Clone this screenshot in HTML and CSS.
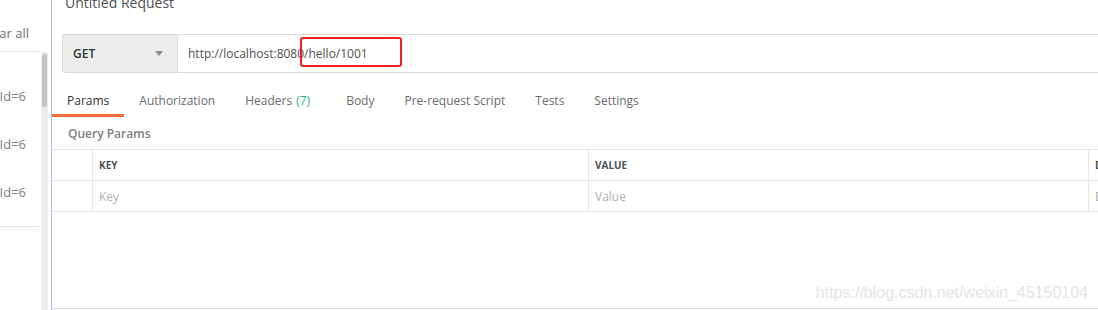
FILE: index.html
```html
<!DOCTYPE html>
<html lang="en">

<head>
    <meta charset="UTF-8">
    <title>Untitled Request</title>
    <link rel="stylesheet" href="styles.css">
</head>

<body>

    <div class="sidebar">
        <div class="side-list">
            <div class="side-head">Clear all</div>
            <div class="side-items">
                <div class="side-item">?userId=6</div>
                <div class="side-item">?userId=6</div>
                <div class="side-item">?userId=6</div>
            </div>
        </div>
        <div class="scroll-track">
            <div class="scroll-thumb"></div>
        </div>
    </div>

    <div class="main">
        <div class="title">Untitled Request</div>

        <div class="url-row">
            <div class="method">
                <span>GET</span>
                <span class="caret"></span>
            </div>
            <div class="url-input">
                http://localhost:8080/hello/1001
                <div class="mark"></div>
            </div>
        </div>

        <div class="tabs">
            <div class="tab active">Params</div>
            <div class="tab">Authorization</div>
            <div class="tab with-count">Headers <span class="count">(7)</span></div>
            <div class="tab">Body</div>
            <div class="tab">Pre-request Script</div>
            <div class="tab">Tests</div>
            <div class="tab">Settings</div>
        </div>

        <div class="section-label">Query Params</div>

        <div class="params-table">
            <div class="cell"></div>
            <div class="cell head">Key</div>
            <div class="cell head">Value</div>
            <div class="cell head">Description</div>

            <div class="cell"></div>
            <div class="cell placeholder">Key</div>
            <div class="cell placeholder">Value</div>
            <div class="cell placeholder">Description</div>
        </div>

        <div class="filler"></div>

        <div class="watermark">https://blog.csdn.net/weixin_45150104</div>
    </div>

</body>

</html>
```

FILE: styles.css
```css
body {
    margin: 0;
    height: 310px;
    overflow: hidden;
    display: flex;
    font-family: 'Open Sans', 'Noto Sans', sans-serif;
    color: #505050;
    background-color: #fff;
}

/* history sidebar, scrolled so only its right edge shows */
.sidebar {
    width: 51px;
    flex-shrink: 0;
    display: flex;
    border-right: 1px solid #a8c3ee;
}

.side-list {
    width: 41px;
    flex-shrink: 0;
    overflow: hidden;
}

.side-head {
    height: 37px;
    padding-top: 14px;
    display: flex;
    align-items: center;
    justify-content: flex-end;
    padding-right: 10px;
    white-space: nowrap;
    font-size: 13px;
    color: #707070;
    border-bottom: 1px solid #e2e2e2;
    margin-right: 2px;
}

.side-items {
    padding: 20px 0 10px;
    border-bottom: 1px solid #e2e2e2;
    margin-right: 2px;
}

.side-item {
    height: 48px;
    display: flex;
    align-items: center;
    justify-content: flex-end;
    padding-right: 13px;
    white-space: nowrap;
    font-size: 13px;
    color: #808080;
}

.scroll-track {
    width: 7px;
    margin-top: 52px;
    background-color: #ececec;
}

.scroll-thumb {
    height: 53px;
    margin: 2px 1px 0;
    border-radius: 3px;
    background-color: #c3c3c3;
}

/* request builder */
.main {
    flex: 1;
    position: relative;
    display: flex;
    flex-direction: column;
    padding-bottom: 1px;
    min-width: 0;
}

.title {
    margin-top: -7px;
    padding-left: 13px;
    line-height: 20px;
    font-size: 14px;
    color: #505050;
}

.url-row {
    display: flex;
    height: 39px;
    margin: 21px 0 0 10px;
}

.method {
    width: 116px;
    box-sizing: border-box;
    display: flex;
    align-items: center;
    justify-content: space-between;
    padding: 0 14px 0 10px;
    background-color: #ededed;
    border: 1px solid #d9d9d9;
    border-radius: 3px 0 0 3px;
    font-size: 12px;
    font-weight: 600;
    color: #333;
}

.caret {
    width: 0;
    height: 0;
    border-left: 4px solid transparent;
    border-right: 4px solid transparent;
    border-top: 5px solid #8a8a8a;
}

.url-input {
    flex: 1;
    position: relative;
    display: flex;
    align-items: center;
    padding-left: 10px;
    border-top: 1px solid #d9d9d9;
    border-bottom: 1px solid #d9d9d9;
    font-size: 12px;
    color: #505050;
    white-space: nowrap;
}

/* red highlight drawn over the url */
.mark {
    position: absolute;
    left: 122px;
    top: 2px;
    width: 98px;
    height: 26px;
    border: 2px solid #f51d1d;
    border-radius: 3px;
}

.tabs {
    display: flex;
    margin-top: 12px;
    height: 32px;
}

.tab {
    padding: 2px 15px 0;
    display: flex;
    align-items: center;
    font-size: 12px;
    color: #6b6b6b;
    border-bottom: 3px solid transparent;
    white-space: nowrap;
}

.tab.with-count {
    padding-right: 21px;
}

.tab.active {
    color: #333;
    border-bottom-color: #f26b3a;
}

.count {
    margin-left: 4px;
    color: #26b47f;
}

.section-label {
    height: 32px;
    display: flex;
    align-items: center;
    padding-left: 16px;
    font-size: 12px;
    font-weight: 600;
    color: #808080;
}

.params-table {
    display: grid;
    grid-template-columns: 40px 496px 500px 1fr;
    grid-auto-rows: 31px;
    border-top: 1px solid #e6e6e6;
}

.cell {
    display: flex;
    align-items: center;
    padding-left: 6px;
    border-bottom: 1px solid #e6e6e6;
    border-left: 1px solid #e6e6e6;
    font-size: 12px;
    white-space: nowrap;
    overflow: hidden;
}

.cell:nth-child(4n+1) {
    border-left: none;
}

.cell.head {
    font-size: 10px;
    font-weight: 700;
    text-transform: uppercase;
    color: #505050;
}

.cell.placeholder {
    color: #b0b0b0;
}

.filler {
    flex: 1;
    border-bottom: 1px solid #dedede;
}

.watermark {
    position: absolute;
    right: 10px;
    bottom: 8px;
    font-family: 'Liberation Sans', Arial, sans-serif;
    font-size: 16px;
    color: #e4e4e4;
}
```
